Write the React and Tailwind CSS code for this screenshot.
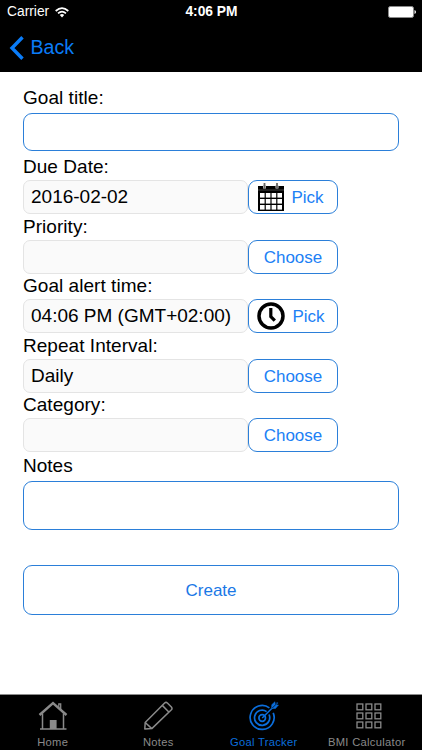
import React, { useState } from "react";

const BackIcon = () => (
  <svg width="15" height="24" viewBox="0 0 15 24" fill="none">
    <path d="M13.5 1.2 L3 12 L13.5 22.8" stroke="#0a7cf8" strokeWidth="3.4" />
  </svg>
);

const WifiIcon = () => (
  <svg width="14" height="11" viewBox="0 0 14 11" fill="none">
    <path d="M0.7 4 Q7 -1.8 13.3 4" stroke="#fff" strokeWidth="1.7" />
    <path d="M3 6.4 Q7 2.8 11 6.4" stroke="#fff" strokeWidth="1.6" />
    <path d="M4.8 8 Q7 6.2 9.2 8 L7 10.4 Z" fill="#fff" />
  </svg>
);

const BatteryIcon = () => (
  <svg width="28" height="12" viewBox="0 0 28 12">
    <rect x="0.5" y="0.5" width="25" height="11" rx="1.8" fill="#fff" stroke="#8a8a8a" />
    <path d="M26.5 4 Q28 4.5 28 6 Q28 7.5 26.5 8 Z" fill="#fff" />
  </svg>
);

const CalendarIcon = () => (
  <svg width="26" height="28" viewBox="0 0 26 28">
    <rect x="0" y="3" width="26" height="25" fill="#000" />
    <rect x="0" y="6.5" width="26" height="1" fill="#444" />
    {[10, 16, 22].map((y) =>
      [2, 7.8, 13.6, 19.4].map((x) => (
        <rect key={`${x}-${y}`} x={x} y={y} width="4.6" height="4.6" fill="#fff" />
      ))
    )}
    <path d="M6.5 2 V5.5 M19 2 V5.5" stroke="#ccc" strokeWidth="3" />
    <path d="M6.5 0 V5.5 M19 0 V5.5" stroke="#666" strokeWidth="1.8" />
  </svg>
);

const ClockIcon = () => (
  <svg width="28" height="28" viewBox="0 0 28 28" fill="none" stroke="#000">
    <circle cx="14" cy="14" r="12" strokeWidth="3.5" />
    <path d="M13.8 6 V14.5 L17.8 18.7" strokeWidth="3.2" />
  </svg>
);

const HomeIcon = () => (
  <svg width="30" height="30" viewBox="0 0 30 30" fill="none" stroke="currentColor">
    <path d="M1.5 14 L15 2 L28.5 14" strokeWidth="2.4" />
    <path d="M20.8 6.5 V3 H22.7 V8.5" strokeWidth="1.3" />
    <path d="M4.5 12.5 V28 M25.5 12.5 V28 M2 28 H28.5" strokeWidth="1.5" />
    <rect x="11.8" y="19" width="6.8" height="9" fill="currentColor" stroke="none" />
  </svg>
);

const PencilIcon = () => (
  <svg width="30" height="30" viewBox="0 0 30 30" fill="none" stroke="currentColor" strokeWidth="1.5" strokeLinejoin="round">
    <path d="M1.8 28 L2.2 21.5 L21.6 2 Q23 0.8 24.4 2 L28.4 6 Q29.6 7.4 28.4 8.8 L8.8 27.6 Z" />
    <path d="M2.2 21.5 L8.8 27.6 M19.3 4.4 L25.8 11" />
  </svg>
);

const TargetIcon = () => (
  <svg width="30" height="30" viewBox="0 0 30 30" fill="none" stroke="currentColor" strokeWidth="1.7">
    <path d="M20.4 6.9 A12 12 0 1 0 24.2 11.8" />
    <path d="M17.6 10.6 A7.6 7.6 0 1 0 20 13.5" />
    <circle cx="13.2" cy="17" r="3.3" />
    <path d="M13.2 17 L28.8 1.5" strokeWidth="1.5" />
    <path d="M22.7 7.5 V3.7 L26 0.7 V4 H29.5 L26.5 7.5 Z" fill="currentColor" strokeWidth="0.5" />
    <path d="M23 7.3 L29 1.3" stroke="#000" strokeWidth="0.7" />
  </svg>
);

const GridIcon = () => (
  <svg width="26" height="26" viewBox="0 0 26 26" fill="none" stroke="currentColor" strokeWidth="1.3">
    {[1, 10, 19].map((y) =>
      [1, 10, 19].map((x) => (
        <rect key={`${x}-${y}`} x={x} y={y} width="5.8" height="5.8" />
      ))
    )}
  </svg>
);

const fields = [
  { label: "Due Date:", value: "2016-02-02", button: "Pick", icon: CalendarIcon },
  { label: "Priority:", value: "", button: "Choose" },
  { label: "Goal alert time:", value: "04:06 PM (GMT+02:00)", button: "Pick", icon: ClockIcon },
  { label: "Repeat Interval:", value: "Daily", button: "Choose" },
  { label: "Category:", value: "", button: "Choose" },
];

const tabs = [
  { name: "Home", icon: HomeIcon },
  { name: "Notes", icon: PencilIcon },
  { name: "Goal Tracker", icon: TargetIcon },
  { name: "BMI Calculator", icon: GridIcon, labelClass: "mr-[5px]" },
];

function FieldRow({ label, value, button, icon: Icon }) {
  return (
    <div className="h-[59.5px]">
      <div className="h-[25.5px] pt-[0.5px] leading-[24px] tracking-[0.04px]">{label}</div>
      <div className="flex h-[34px]">
        <div className="w-[225px] rounded-[7px] border border-[#e4e4e4] bg-[#fafafa] pl-[7px] leading-[32px] whitespace-nowrap">
          {value}
        </div>
        <button
          className={`flex w-[90px] items-center justify-center rounded-[9px] border border-[#2b7fd9] text-[17px] text-[#2080f5] ${
            Icon ? "pr-[4px]" : ""
          }`}
        >
          {Icon && (
            <span className="mr-[7px]">
              <Icon />
            </span>
          )}
          <span className="pt-[2px]">{button}</span>
        </button>
      </div>
    </div>
  );
}

export default function App() {
  const [activeTab, setActiveTab] = useState("Goal Tracker");
  const [title, setTitle] = useState("");
  const [notes, setNotes] = useState("");

  return (
    <div className="flex h-[750px] w-[422px] flex-col overflow-hidden bg-white font-['Liberation_Sans',Arial,sans-serif] text-[19px] text-black">
      {/* Header */}
      <header className="h-[72px] bg-black">
        <div className="grid h-6 grid-cols-3 items-center pl-[7px] pr-[6px] text-white">
          <div className="flex items-center gap-[6px] text-[13.8px]">
            Carrier
            <WifiIcon />
          </div>
          <div className="text-center text-[13.8px] font-bold">4:06 PM</div>
          <div className="flex justify-end">
            <BatteryIcon />
          </div>
        </div>
        <button className="flex h-[47px] items-center pl-[9px] text-[19.6px] text-[#0a7cf8]">
          <BackIcon />
          <span className="ml-[6.5px] pt-px">Back</span>
        </button>
      </header>

      {/* Form */}
      <main className="flex-1 px-[23px] pt-[15px]">
        <div className="h-[25.5px] leading-[22px] tracking-[0.04px]">Goal title:</div>
        <input
          value={title}
          onChange={(e) => setTitle(e.target.value)}
          className="block h-[38.5px] w-[376px] rounded-[9px] border border-[#2b7fd9] px-2 outline-none"
        />
        <div className="pt-[3.5px]">
          {fields.map((field) => (
            <FieldRow key={field.label} {...field} />
          ))}
        </div>
        <div className="h-[29px] pt-[2px] leading-[24px]">Notes</div>
        <textarea
          value={notes}
          onChange={(e) => setNotes(e.target.value)}
          className="block h-[49px] w-[376px] resize-none rounded-[9px] border border-[#2b7fd9] px-2 outline-none"
        />
        <button className="mt-[35px] block h-[50px] w-[376px] rounded-[9px] border border-[#2b7fd9] pt-[2px] text-[17px] text-[#1a78e6]">
          Create
        </button>
      </main>

      {/* Tab bar */}
      <nav className="grid h-14 grid-cols-4 border-t border-[#8c8c8c] bg-black">
        {tabs.map(({ name, icon: Icon, labelClass }) => (
          <button
            key={name}
            onClick={() => setActiveTab(name)}
            className={`flex flex-col items-center pt-[6px] text-[11.2px] tracking-[0.3px] whitespace-nowrap ${
              activeTab === name ? "text-[#0b6edc]" : "text-[#8a8a8a]"
            }`}
          >
            <span className="flex h-[30px] items-center">
              <Icon />
            </span>
            <span className={`mt-[4px] leading-[15px] ${labelClass || ""}`}>{name}</span>
          </button>
        ))}
      </nav>
    </div>
  );
}
